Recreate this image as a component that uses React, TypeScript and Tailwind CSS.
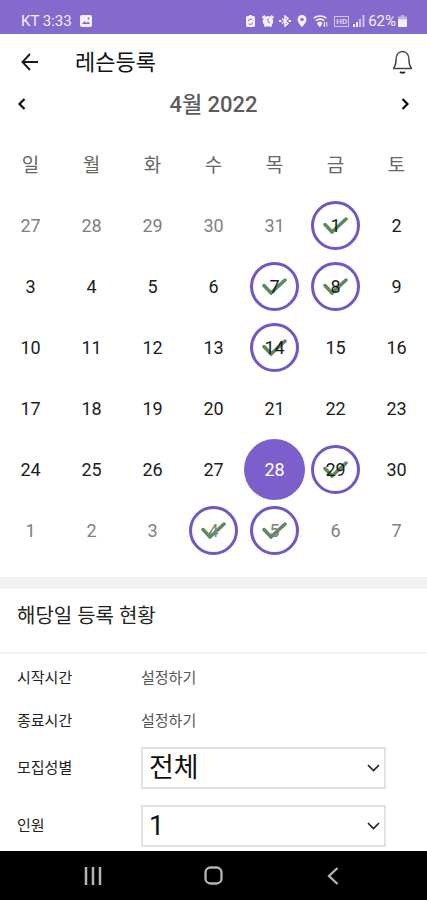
import { useState } from 'react';

interface Day {
  key: string;
  day: number;
  outside: boolean;
  checked: boolean;
}

const WEEKDAYS = ['일', '월', '화', '수', '목', '금', '토'];
const CHECKED = ['3-1', '3-7', '3-8', '3-14', '3-29', '4-4', '4-5'];

// six weeks, starting on the sunday before April 1st
const DAYS: Day[] = Array.from({ length: 42 }, (_, i) => {
  const date = new Date(2022, 2, 27 + i);
  const key = `${date.getMonth()}-${date.getDate()}`;
  return { key, day: date.getDate(), outside: date.getMonth() !== 3, checked: CHECKED.includes(key) };
});

function StatusBar() {
  return (
    <div className="flex h-[34px] items-center justify-between bg-[#856acd] pt-2 pr-5 pl-[21px] text-white/90">
      <div className="flex items-center gap-2">
        <span className="text-[15px] leading-4">KT 3:33</span>
        <svg className="h-3 w-3" viewBox="0 0 12 12">
          <rect width="12" height="12" rx="2" fill="currentColor" />
          <path d="M2 9l2.500-3 2 2L8 6.500l2.200 2.500z" fill="#856acd" />
          <circle cx="8.500" cy="3.500" r="1" fill="#856acd" />
        </svg>
      </div>
      <div className="flex items-center">
        <svg className="mr-[7px] h-3 w-[9px]" viewBox="0 0 9 12">
          <path d="M3 0h3v1h1.500A1.500 1.500 0 0 1 9 2.500v8A1.500 1.500 0 0 1 7.500 12h-6A1.500 1.500 0 0 1 0 10.500v-8A1.500 1.500 0 0 1 1.500 1H3z" fill="currentColor" />
          <path d="M2.500 6a2 2 0 0 1 3.700-1M6.500 7.500a2 2 0 0 1-3.700 1" fill="none" stroke="#856acd" />
        </svg>
        <svg className="mr-[5px] h-3 w-3" viewBox="0 0 12 12">
          <path d="M.5 3L3 .8M11.500 3L9 .8M2.500 11.500L4 10M9.500 11.500L8 10" stroke="currentColor" strokeWidth="2" />
          <circle cx="6" cy="6.300" r="5.200" fill="currentColor" />
          <path d="M6 3.500v3l2 1.500" fill="none" stroke="#856acd" />
        </svg>
        <svg className="mr-[6px] h-3 w-3" viewBox="0 0 12 12" fill="none" stroke="currentColor" strokeWidth="1.500">
          <path d="M3 3.500l6 5L6 11V1l3 2.500-6 5" />
          <path d="M0 6h2.500M9.500 6H12" strokeWidth="2" />
        </svg>
        <svg className="mr-[6px] h-3 w-[10px]" viewBox="0 0 9 12">
          <path fillRule="evenodd" d="M4.500 0A4.400 4.400 0 0 0 0 4.400C0 7.500 4.500 12 4.500 12S9 7.500 9 4.400A4.400 4.400 0 0 0 4.500 0zm0 2.700a1.700 1.700 0 1 1 0 3.400 1.700 1.700 0 0 1 0-3.400z" fill="currentColor" />
        </svg>
        <svg className="mr-[6px] h-3 w-[15px]" viewBox="0 0 15 12" fill="none" stroke="currentColor" strokeWidth="1.600">
          <path d="M.7 3.200a10 10 0 0 1 12.600 0M2.800 5.700a7 7 0 0 1 8.400 0M4.800 8a4 4 0 0 1 4 0" />
          <path d="M6.800 11l-1.500-2h3z" />
          <path d="M11.500 7v4.500M10.200 10.200l1.300 1.300M13.800 11.500V7" strokeWidth="1" />
        </svg>
        <span className="mr-1 border border-white/60 px-px text-[8px] leading-[9px] font-medium text-white/80">HD</span>
        <svg className="mr-[3px] h-3 w-3" viewBox="0 0 12 12" fill="currentColor">
          <path d="M0 9h2v3H0zM3 7h2v5H3z" />
          <path d="M6 4h2v8H6zM9.500 0h2v12h-2z" opacity=".65" />
        </svg>
        <span className="mr-[2px] text-[15px] leading-4">62%</span>
        <svg className="h-3 w-[9px]" viewBox="0 0 9 12" fill="currentColor">
          <path d="M3 0h3v1.500h3V5H0V1.500h3z" opacity=".55" />
          <path d="M0 4.500h9V11a1 1 0 0 1-1 1H1a1 1 0 0 1-1-1z" />
        </svg>
      </div>
    </div>
  );
}

function DayCell({ item, selected, onSelect }: { item: Day; selected: boolean; onSelect: () => void }) {
  let color = item.outside ? 'text-[#808080]' : 'text-[#1c1c1c]';
  if (selected) color = 'text-white';

  return (
    <button onClick={onSelect} className={`flex h-[61px] items-center justify-center text-lg ${color}`}>
      <span
        className={`relative flex items-center justify-center rounded-full ${
          selected ? 'h-[61px] w-[61px] bg-[#7c5fcb]' : 'h-[49px] w-[49px]'
        } ${item.checked ? 'border-3 border-[#7256c5]' : ''}`}
      >
        {item.checked && (
          <svg className="absolute inset-0 m-auto h-[17px] w-[25px]" viewBox="0 0 25 17" fill="none">
            <path d="M2 7.500l7 7.500L23 2" stroke="#5c8a5e" strokeWidth="3.500" strokeLinecap="round" />
          </svg>
        )}
        <span className="relative">{item.day}</span>
      </span>
    </button>
  );
}

function SelectRow({ id, label, options }: { id: string; label: string; options: string[] }) {
  return (
    <div className="mb-4 flex items-center">
      <label htmlFor={id} className="w-[124px] text-[15px] text-[#222]">{label}</label>
      <div className="relative mr-6 flex-1">
        <select id={id} className="block h-[42px] w-full appearance-none border-2 border-[#e2e2e2] bg-white pl-[6px] text-[27px] leading-9 text-[#111]">
          {options.map((o) => <option key={o}>{o}</option>)}
        </select>
        <svg className="pointer-events-none absolute inset-y-0 right-[6px] my-auto h-2 w-[13px]" viewBox="0 0 13 8" fill="none">
          <path d="M1 1l5.500 5.500L12 1" stroke="#222" strokeWidth="1.600" />
        </svg>
      </div>
    </div>
  );
}

export default function App() {
  const [selected, setSelected] = useState('3-28');

  return (
    <div className="flex min-h-screen flex-col bg-white font-[Roboto,'Noto_Sans_CJK_KR',sans-serif]">
      <StatusBar />

      <header className="flex h-14 items-center justify-between pr-[14px] pl-[21px]">
        <div className="flex items-center">
          <button aria-label="뒤로">
            <svg className="h-[18px] w-[18px]" viewBox="0 0 18 18" fill="none" stroke="#1a1a1a" strokeWidth="1.900">
              <path d="M9 1L1.500 9 9 17M1.500 9H17" />
            </svg>
          </button>
          <h1 className="ml-[36px] text-[22px] text-[#111]">레슨등록</h1>
        </div>
        <button aria-label="알림">
          <svg className="h-6 w-[21px]" viewBox="0 0 21 24" fill="none" stroke="#444" strokeWidth="1.500">
            <path d="M1 18.500h19M1.500 18c2-2 2.500-4 2.500-8 0-5 2.500-8.500 6.500-8.500S17 5 17 10c0 4 .5 6 2.500 8" />
            <path d="M8 22q2.500 1.500 5 0" stroke="#222" strokeWidth="2" />
          </svg>
        </button>
      </header>

      <div className="flex h-7 items-center justify-between px-[17px]">
        <button aria-label="이전 달">
          <svg className="h-3 w-[9px]" viewBox="0 0 9 12" fill="none">
            <path d="M7.500 1l-5 5 5 5" stroke="#111" strokeWidth="2.200" />
          </svg>
        </button>
        <h2 className="pt-[2px] text-[22px] leading-7 font-medium text-[#5c5c5c]">4월 2022</h2>
        <button aria-label="다음 달">
          <svg className="h-3 w-[9px]" viewBox="0 0 9 12" fill="none">
            <path d="M1.500 1l5 5-5 5" stroke="#111" strokeWidth="2.200" />
          </svg>
        </button>
      </div>

      <div className="mt-8 grid grid-cols-7 text-center text-[19px] leading-8 text-[#666]">
        {WEEKDAYS.map((w) => <span key={w}>{w}</span>)}
      </div>
      <div className="mt-[13px] grid grid-cols-7">
        {DAYS.map((item) => (
          <DayCell key={item.key} item={item} selected={item.key === selected} onSelect={() => setSelected(item.key)} />
        ))}
      </div>

      <section className="mt-4 border-t-12 border-[#f1f1f1]">
        <h2 className="border-b-2 border-[#f3f3f3] px-[17px] pt-[13px] pb-[22px] text-[20px] leading-7 text-[#222]">해당일 등록 현황</h2>
        <div className="px-[17px] pt-[10px]">
          <div className="mb-[15px] flex h-7 items-center text-[15px]">
            <span className="w-[124px] text-[#222]">시작시간</span>
            <button className="text-[#555]">설정하기</button>
          </div>
          <div className="mb-3 flex h-7 items-center text-[15px]">
            <span className="w-[124px] text-[#222]">종료시간</span>
            <button className="text-[#555]">설정하기</button>
          </div>
          <SelectRow id="gender" label="모집성별" options={['전체', '남자', '여자']} />
          <SelectRow id="people" label="인원" options={['1', '2', '3', '4']} />
        </div>
      </section>

      <nav className="-mt-3 flex h-[49px] items-center justify-around bg-black pr-[34px] pl-[33px] text-[#b5b5b5]">
        <button aria-label="최근 앱" className="flex w-5 justify-center">
          <svg className="h-[18px] w-[18px]" viewBox="0 0 18 18" stroke="currentColor" strokeWidth="2.500">
            <path d="M2 0v18M9 0v18M16 0v18" />
          </svg>
        </button>
        <button aria-label="홈" className="flex w-5 justify-center">
          <svg className="h-[19px] w-[19px]" viewBox="0 0 19 19" fill="none" stroke="currentColor" strokeWidth="2.300">
            <rect x="1.500" y="1.500" width="16" height="16" rx="5" />
          </svg>
        </button>
        <button aria-label="뒤로 가기" className="flex w-5 justify-center">
          <svg className="h-[18px] w-[12px]" viewBox="0 0 12 18" fill="none" stroke="currentColor" strokeWidth="2.300">
            <path d="M10.500 1L2 9l8.500 8" />
          </svg>
        </button>
      </nav>
    </div>
  );
}
